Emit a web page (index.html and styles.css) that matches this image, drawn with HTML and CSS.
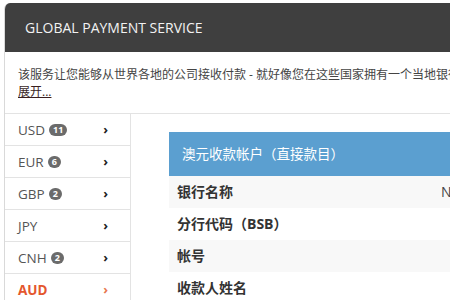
FILE: index.html
```html
<!DOCTYPE html>
<html lang="zh-CN">
<head>
    <meta charset="UTF-8">
    <title>Global Payment Service</title>
    <link rel="stylesheet" href="styles.css">
</head>
<body>
    <div class="panel">
        <div class="panel-head">GLOBAL PAYMENT SERVICE</div>
        <div class="intro">
            <p class="intro-line">该服务让您能够从世界各地的公司接收付款 - 就好像您在这些国家拥有一个当地银行帐户一样。</p>
            <a class="more" href="#">展开...</a>
        </div>
        <div class="panel-body">
            <ul class="currency-list">
                <li><span class="code">USD</span><em class="badge">11</em><i class="arrow">&#x203A;</i></li>
                <li><span class="code">EUR</span><em class="badge">6</em><i class="arrow">&#x203A;</i></li>
                <li><span class="code">GBP</span><em class="badge">2</em><i class="arrow">&#x203A;</i></li>
                <li><span class="code">JPY</span><i class="arrow">&#x203A;</i></li>
                <li><span class="code">CNH</span><em class="badge">2</em><i class="arrow">&#x203A;</i></li>
                <li class="active"><span class="code">AUD</span><i class="arrow">&#x203A;</i></li>
            </ul>
            <div class="content">
                <div class="account">
                    <div class="account-title">澳元收款帐户（直接款目）</div>
                    <div class="row"><span class="label">银行名称</span><span class="value">National Australia Bank</span></div>
                    <div class="row"><span class="label">分行代码（BSB）</span><span class="value"></span></div>
                    <div class="row"><span class="label">帐号</span><span class="value"></span></div>
                    <div class="row"><span class="label">收款人姓名</span><span class="value"></span></div>
                </div>
            </div>
        </div>
    </div>
</body>
</html>
```

FILE: styles.css
```css
* {
    padding: 0;
    margin: 0;
}
ul,li{
    list-style: none;
}
html,body{
    overflow: hidden;
    background: #fff;
}
body{
    font-family: "Open Sans", "Noto Sans CJK SC", sans-serif;
    color: #333;
}
.panel{
    width: 640px;
    margin: 3px 0 0 4px;
    border-left: 1px solid #d9d9d9;
    border-radius: 6px 0 0 0;
    overflow: hidden;
}
.panel-head{
    height: 49px;
    line-height: 49px;
    padding-left: 20px;
    background: #3f3f3f;
    color: #f2f2f2;
    font-size: 14px;
}
.intro{
    padding: 14px 0 13px 13px;
    font-size: 12px;
    line-height: 17px;
    color: #444;
    border-bottom: 1px solid #e3e3e3;
}
.intro-line{
    white-space: nowrap;
}
.more{
    color: #3a1f1f;
    text-decoration: underline;
}
.panel-body{
    display: flex;
}
.currency-list{
    width: 125px;
    border-right: 1px solid #e3e3e3;
}
.currency-list li{
    display: flex;
    align-items: center;
    height: 31px;
    padding: 0 22px 0 13px;
    border-bottom: 1px solid #e3e3e3;
    font-size: 13.5px;
    color: #555;
}
.badge{
    margin-left: 4px;
    height: 12px;
    min-width: 13px;
    padding: 0 4px;
    border-radius: 6px;
    background: #6b6b6b;
    color: #fff;
    font-style: normal;
    font-weight: bold;
    font-size: 9px;
    line-height: 12px;
    text-align: center;
    box-sizing: border-box;
}
.arrow{
    margin-left: auto;
    font-style: normal;
    font-weight: bold;
    font-size: 13px;
    line-height: 13px;
    color: #222;
}
.currency-list li.active{
    color: #e4572e;
    font-weight: bold;
}
.currency-list li.active .arrow{
    color: #e8774f;
}
.content{
    flex: 1;
    padding: 18px 0 0 38px;
}
.account-title{
    height: 44px;
    line-height: 44px;
    padding-left: 13px;
    background: #5b9fd0;
    color: #fff;
    font-size: 13.5px;
}
.row{
    display: flex;
    height: 32px;
    line-height: 32px;
    font-size: 14px;
}
.row:nth-child(even){
    background: #f8f8f8;
}
.label{
    width: 264px;
    padding-left: 8px;
    font-weight: bold;
    color: #333;
}
.value{
    color: #444;
    white-space: nowrap;
}
```
